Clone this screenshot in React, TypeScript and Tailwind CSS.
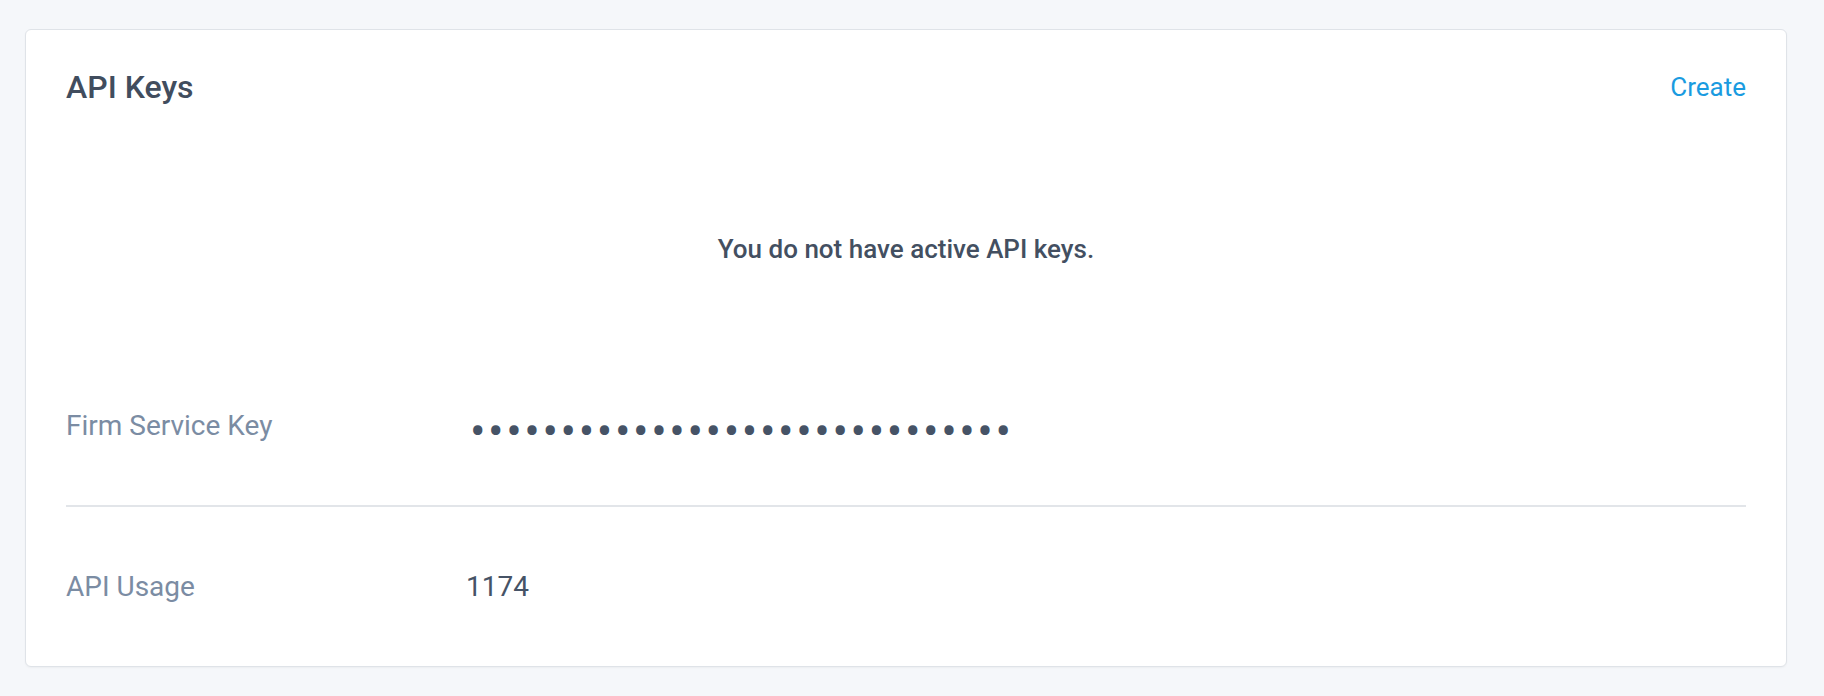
export default function App() {
  const rows = [
    {label: 'Firm Service Key', value: '•'.repeat(30), secret: true},
    {label: 'API Usage', value: '1174', secret: false},
  ];

  return (
    <div className="min-h-[696px] w-full bg-[#f5f7fa] pt-[29px] pb-[29px] pl-[25px] pr-[37px] font-['Roboto',sans-serif]">
      <div className="rounded-[6px] border border-[#dfe3e8] bg-white px-[40px] shadow-[0_1px_2px_rgba(0,0,0,0.04)]">
        <div className="flex items-center justify-between pt-[37px]">
          <h2 className="text-[32px] leading-[40px] font-medium text-[#414d5e]">API Keys</h2>
          <a href="#" className="text-[26px] leading-[40px] text-[#1a9be0]">Create</a>
        </div>

        <div className="pt-[122px] pb-[77px] text-center">
          <p className="text-[26px] leading-[40px] font-medium text-[#434f61]">You do not have active API keys.</p>
        </div>

        {rows.map((row, i) => (
          <div
            key={row.label}
            className={`flex items-center pt-[60px] pb-[59px] ${i < rows.length - 1 ? 'border-b-2 border-[#e2e5e9]' : ''}`}
          >
            <div className="w-[400px] shrink-0 text-[28px] leading-[40px] text-[#7b8ca3]">{row.label}</div>
            {row.secret ? (
              <div className="ml-[4px] h-[40px] translate-y-[5px] text-[46px] leading-[40px] tracking-[2.6px] text-[#465366]">{row.value}</div>
            ) : (
              <div className="text-[28px] leading-[40px] text-[#465366]">{row.value}</div>
            )}
          </div>
        ))}
      </div>
    </div>
  )
}
